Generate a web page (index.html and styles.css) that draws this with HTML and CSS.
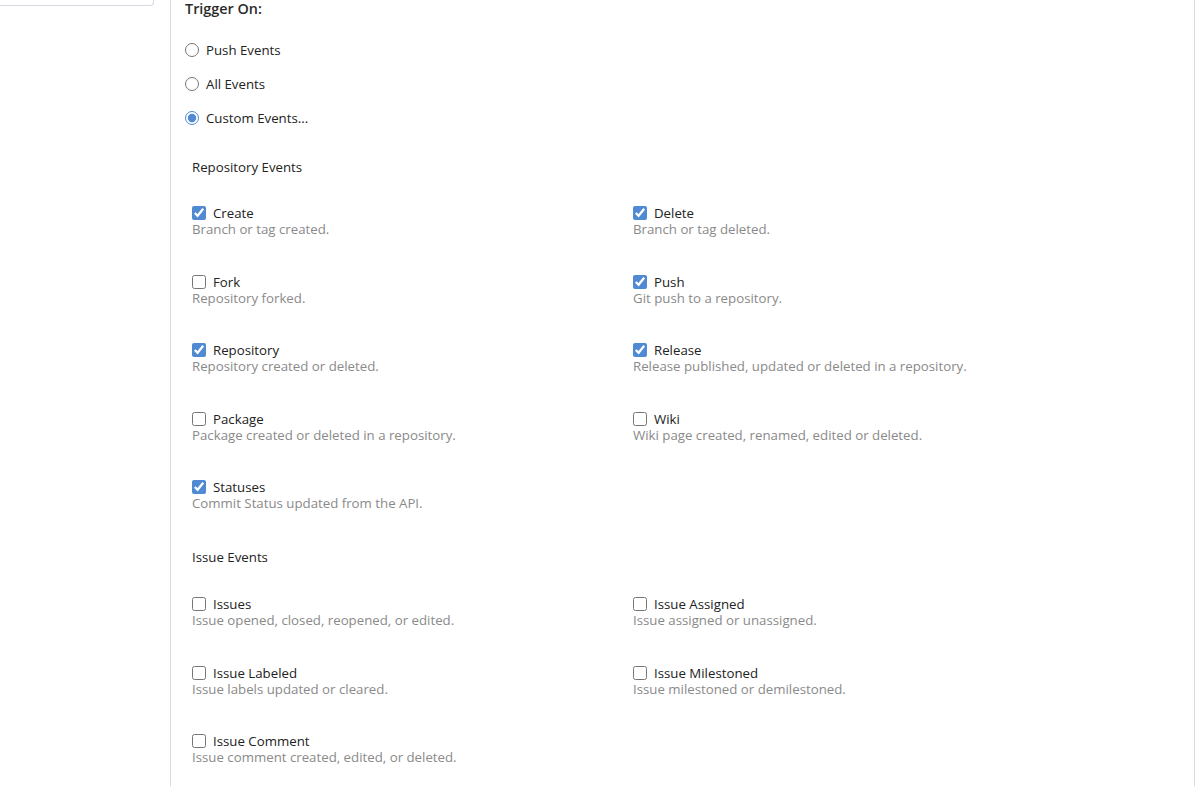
FILE: index.html
```html
<!DOCTYPE html>
<html>
<head>
<meta charset="utf-8">
<link rel="stylesheet" href="styles.css">
</head>
<body>
<div class="page">
  <aside class="sidebar"><div class="side-panel"></div></aside>
  <main class="main">
    <div class="title">Trigger On:</div>
    <div class="radios">
      <label class="radio-row"><input type="radio" name="trig"><span>Push Events</span></label>
      <label class="radio-row"><input type="radio" name="trig"><span>All Events</span></label>
      <label class="radio-row"><input type="radio" name="trig" checked><span>Custom Events...</span></label>
    </div>
    <section class="events">
      <div class="group-title">Repository Events</div>
      <div class="grid">
        <div class="item"><label class="lbl"><input type="checkbox" checked><span>Create</span></label><div class="desc">Branch or tag created.</div></div>
        <div class="item"><label class="lbl"><input type="checkbox" checked><span>Delete</span></label><div class="desc">Branch or tag deleted.</div></div>
        <div class="item"><label class="lbl"><input type="checkbox"><span>Fork</span></label><div class="desc">Repository forked.</div></div>
        <div class="item"><label class="lbl"><input type="checkbox" checked><span>Push</span></label><div class="desc">Git push to a repository.</div></div>
        <div class="item"><label class="lbl"><input type="checkbox" checked><span>Repository</span></label><div class="desc">Repository created or deleted.</div></div>
        <div class="item"><label class="lbl"><input type="checkbox" checked><span>Release</span></label><div class="desc">Release published, updated or deleted in a repository.</div></div>
        <div class="item"><label class="lbl"><input type="checkbox"><span>Package</span></label><div class="desc">Package created or deleted in a repository.</div></div>
        <div class="item"><label class="lbl"><input type="checkbox"><span>Wiki</span></label><div class="desc">Wiki page created, renamed, edited or deleted.</div></div>
        <div class="item"><label class="lbl"><input type="checkbox" checked><span>Statuses</span></label><div class="desc">Commit Status updated from the API.</div></div>
      </div>
    </section>
    <section class="events issue">
      <div class="group-title">Issue Events</div>
      <div class="grid">
        <div class="item"><label class="lbl"><input type="checkbox"><span>Issues</span></label><div class="desc">Issue opened, closed, reopened, or edited.</div></div>
        <div class="item"><label class="lbl"><input type="checkbox"><span>Issue Assigned</span></label><div class="desc">Issue assigned or unassigned.</div></div>
        <div class="item"><label class="lbl"><input type="checkbox"><span>Issue Labeled</span></label><div class="desc">Issue labels updated or cleared.</div></div>
        <div class="item"><label class="lbl"><input type="checkbox"><span>Issue Milestoned</span></label><div class="desc">Issue milestoned or demilestoned.</div></div>
        <div class="item"><label class="lbl"><input type="checkbox"><span>Issue Comment</span></label><div class="desc">Issue comment created, edited, or deleted.</div></div>
      </div>
    </section>
  </main>
</div>
</body>
</html>
```

FILE: styles.css
```css
html, body {
  margin: 0;
  padding: 0;
  background: #fff;
  height: 100%;
  overflow: hidden;
}
body {
  font-family: "Open Sans", "Noto Sans", sans-serif;
  font-size: 13.25px;
  color: #222;
}
.page {
  display: flex;
  height: 786px;
}
.sidebar {
  width: 170px;
  flex: none;
}
.side-panel {
  width: 153px;
  height: 5px;
  border-right: 1px solid #d7dae3;
  border-bottom: 1px solid #d7dae3;
  border-bottom-right-radius: 4px;
}
.main {
  width: 1009px;
  flex: none;
  border-left: 1px solid #d7dae3;
  border-right: 1px solid #d7dae3;
  padding-left: 14px;
}
.title {
  font-size: 14.4px;
  font-weight: 600;
  line-height: 18px;
  color: #2b2b2b;
}
.radios {
  margin-top: 22px;
  display: flex;
  flex-direction: column;
  gap: 14px;
}
.radio-row {
  display: flex;
  align-items: center;
  gap: 7px;
  height: 20px;
}
input[type="radio"], input[type="checkbox"] {
  margin: 0;
  accent-color: #4f8ad2;
}
input[type="radio"] {
  width: 14px;
  height: 14px;
}
input[type="checkbox"] {
  width: 14px;
  height: 14px;
}
.events {
  margin-top: 30px;
  padding-left: 7px;
}
.events.issue {
  margin-top: 37px;
}
.group-title {
  line-height: 18px;
}
.grid {
  margin-top: 29px;
  display: grid;
  grid-template-columns: 441px 441px;
  row-gap: 36.5px;
}
.issue .grid {
  margin-top: 30px;
}
.item {
  display: flex;
  flex-direction: column;
}
.lbl {
  display: flex;
  align-items: center;
  gap: 7px;
  line-height: 16px;
  height: 16px;
}
.desc {
  line-height: 16px;
  color: #8a8a8a;
}
```
